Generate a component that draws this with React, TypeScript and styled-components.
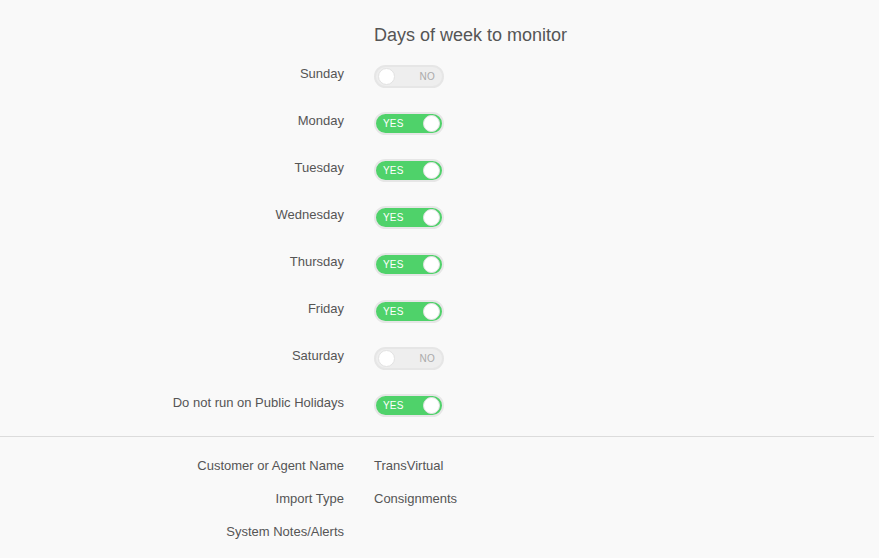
import React from 'react'
import styled, { createGlobalStyle } from 'styled-components'

const GlobalStyle = createGlobalStyle`
    body {
        margin: 0;
        background: #f9f9f9;
        font-family: "Liberation Sans", Arial, sans-serif;
        color: #555;
    }
`

const Page = styled.div`
    width: 879px;
    height: 558px;
    padding-top: 24px;
    box-sizing: border-box;
    overflow: hidden;
`

const Title = styled.h2`
    margin: 0 0 19px 374px;
    font-size: 18px;
    line-height: 22px;
    font-weight: 400;
    color: #555;
`

const Row = styled.div<{ $gap: number }>`
    display: grid;
    grid-template-columns: 344px auto;
    column-gap: 30px;
    align-items: start;
    margin-bottom: ${p => p.$gap}px;
`

const Label = styled.div`
    padding-top: 1px;
    text-align: right;
    font-size: 13px;
    line-height: 16px;
    color: #555;
`

const Value = styled.div`
    padding-top: 1px;
    font-size: 13px;
    line-height: 16px;
    color: #555;
`

const Track = styled.div<{ $on: boolean }>`
    position: relative;
    width: 70px;
    height: 23px;
    box-sizing: border-box;
    border: 2px solid #e6e6e6;
    border-radius: 12px;
    background: ${p => (p.$on ? '#4fd26a' : '#eeeeee')};
    display: flex;
    align-items: center;
    justify-content: ${p => (p.$on ? 'flex-start' : 'flex-end')};
    padding: 0 7px;
    font-size: 10px;
    font-weight: 400;
    color: ${p => (p.$on ? '#fff' : '#aaa')};
    letter-spacing: 0.2px;
`

const Knob = styled.span<{ $on: boolean }>`
    position: absolute;
    top: 1px;
    ${p => (p.$on ? 'right: 2px;' : 'left: 2px;')}
    width: 15px;
    height: 15px;
    border-radius: 50%;
    background: #fff;
    border: 1px solid #e2e2e2;
`

const Divider = styled.hr`
    margin: 19px 5px 20px 0;
    border: 0;
    border-top: 1px solid #dcdcdc;
`

function Toggle({ on }: { on: boolean }) {
    return (
        <Track $on={on}>
            {on ? 'YES' : 'NO'}
            <Knob $on={on} />
        </Track>
    )
}

const days: [string, boolean][] = [
    ['Sunday', false],
    ['Monday', true],
    ['Tuesday', true],
    ['Wednesday', true],
    ['Thursday', true],
    ['Friday', true],
    ['Saturday', false],
    ['Do not run on Public Holidays', true],
]

const details: [string, string][] = [
    ['Customer or Agent Name', 'TransVirtual'],
    ['Import Type', 'Consignments'],
    ['System Notes/Alerts', ''],
]

export default function App() {
    return (
        <Page>
            <GlobalStyle />
            <Title>Days of week to monitor</Title>
            {days.map(([name, on], i) => (
                <Row key={name} $gap={i === days.length - 1 ? 0 : 24}>
                    <Label>{name}</Label>
                    <Toggle on={on} />
                </Row>
            ))}
            <Divider />
            {details.map(([name, value]) => (
                <Row key={name} $gap={16}>
                    <Label>{name}</Label>
                    <Value>{value}</Value>
                </Row>
            ))}
        </Page>
    )
}
